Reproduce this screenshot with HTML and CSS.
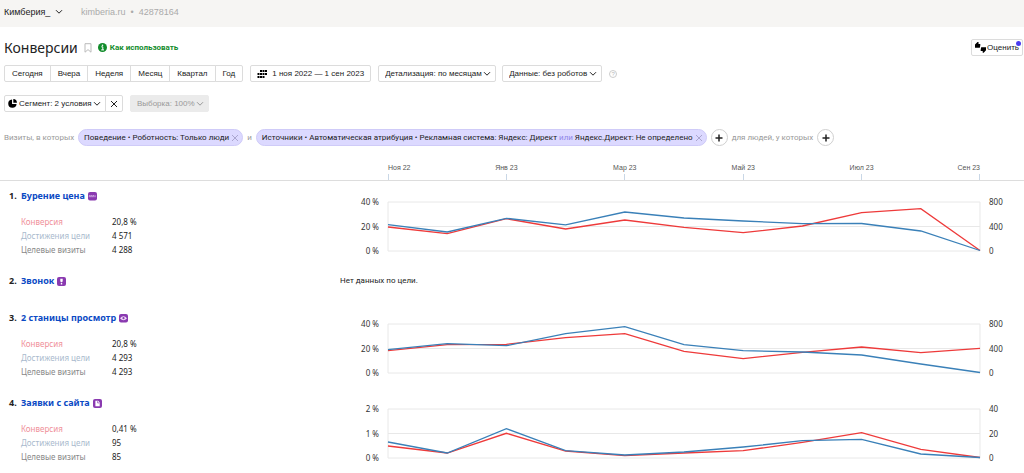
FILE: index.html
```html
<!DOCTYPE html>
<html lang="ru">
<head>
    <meta charset="UTF-8">
    <meta name="viewport" content="width=device-width, initial-scale=1.0">
    <title>Конверсии</title>
    <link rel="stylesheet" href="styles.css">
</head>
<body>
    <!-- общие иконки -->
    <svg class="sprite" aria-hidden="true">
        <symbol id="chevron" viewBox="0 0 8 6"><path d="M1 1.2l3 3 3-3" fill="none" stroke="currentColor"/></symbol>
        <symbol id="cross" viewBox="0 0 8 8"><path d="M1 1l6 6M7 1l-6 6" fill="none" stroke="currentColor"/></symbol>
        <symbol id="plus" viewBox="0 0 8 8"><path d="M4 .5v7M.5 4h7" fill="none" stroke="currentColor" stroke-width="1.5"/></symbol>
    </svg>

    <header class="topbar">
        <div class="dropdown account">
            <select aria-label="Счётчик"><option>Кимберия_</option></select>
            <svg class="chevron"><use href="#chevron"/></svg>
        </div>
        <div class="counter"><a href="#">kimberia.ru</a> &nbsp;•&nbsp; 42878164</div>
    </header>

    <main>
        <div class="title-row">
            <h1>Конверсии</h1>
            <button class="icon-btn" aria-label="В закладки">
                <svg width="8" height="10" viewBox="0 0 8 10"><path d="M1 .7h6v8.5L4 6.6 1 9.2z" fill="none" stroke="#bbb"/></svg>
            </button>
            <a class="howto" href="#">
                <svg width="9" height="9" viewBox="0 0 9 9"><circle cx="4.500" cy="4.500" r="4.500" fill="#128c2b"/><path d="M3.300 3.800h1.500v3M3.200 6.900h2.800" fill="none" stroke="#fff"/><circle cx="4.500" cy="2.200" r=".8" fill="#fff"/></svg>
                Как использовать
            </a>
            <button class="btn rate">
                <svg width="11" height="11" viewBox="0 0 10 10"><path d="M0 2.300L2.300.100h.9v1.700h1.200q.6.200.5.800L4.400 5.200H0z"/><path d="M10 7.500L7.900 9.800H7V8.200H5.500q-.5-.2-.4-.8L5.600 4.800H10z"/></svg>
                Оценить
            </button>
        </div>

        <div class="toolbar">
            <div class="btn-group">
                <button class="btn">Сегодня</button>
                <button class="btn">Вчера</button>
                <button class="btn">Неделя</button>
                <button class="btn">Месяц</button>
                <button class="btn">Квартал</button>
                <button class="btn">Год</button>
            </div>
            <button class="btn date">
                <svg width="10" height="8" viewBox="0 0 10 8"><path d="M3 0h2v2H3zM5.500 0h2v2h-2zM8 0h2v2H8zM.500 3h2v2h-2zM3 3h2v2H3zM5.500 3h2v2h-2zM8 3h2v2H8zM.500 6h2v2h-2zM3 6h2v2H3zM5.500 6h2v2h-2z"/></svg>
                1 ноя 2022 — 1 сен 2023
            </button>
            <div class="dropdown boxed">
                <select aria-label="Детализация"><option>Детализация: по месяцам</option></select>
                <svg class="chevron"><use href="#chevron"/></svg>
            </div>
            <div class="dropdown boxed data">
                <select aria-label="Данные"><option>Данные: без роботов</option></select>
                <svg class="chevron"><use href="#chevron"/></svg>
            </div>
            <button class="icon-btn help" aria-label="Справка">?</button>
        </div>

        <div class="toolbar segment-row">
            <div class="btn-group">
                <div class="dropdown boxed segment">
                    <svg class="pie" width="9" height="9" viewBox="0 0 8 8"><path d="M3.600.400v4h4A3.700 3.700 0 1 1 3.600.400z"/><path d="M4.700 0A3.500 3.500 0 0 1 8 3.300H4.700z"/></svg>
                    <select aria-label="Сегмент"><option>Сегмент: 2 условия</option></select>
                    <svg class="chevron"><use href="#chevron"/></svg>
                </div>
                <button class="btn clear" aria-label="Сбросить сегмент"><svg width="8" height="8"><use href="#cross"/></svg></button>
            </div>
            <div class="dropdown boxed sampling">
                <select aria-label="Выборка" disabled><option>Выборка: 100%</option></select>
                <svg class="chevron"><use href="#chevron"/></svg>
            </div>
        </div>

        <div class="filters">
            <span>Визиты, в которых</span>
            <div class="pill">
                Поведение • Роботность: Только люди
                <button class="icon-btn" aria-label="Удалить условие"><svg width="8" height="8"><use href="#cross"/></svg></button>
            </div>
            <span>и</span>
            <div class="pill">
                <div>Источники • Автоматическая атрибуция • Рекламная система: Яндекс: Директ <em>или</em> Яндекс.Директ: Не определено</div>
                <button class="icon-btn" aria-label="Удалить условие"><svg width="8" height="8"><use href="#cross"/></svg></button>
            </div>
            <button class="add" aria-label="Добавить условие"><svg width="8" height="8"><use href="#plus"/></svg></button>
            <span>для людей, у которых</span>
            <button class="add" aria-label="Добавить условие для людей"><svg width="8" height="8"><use href="#plus"/></svg></button>
        </div>

        <div class="timeline">
            <div class="months">
                <span>Ноя 22</span>
                <span>Янв 23</span>
                <span>Мар 23</span>
                <span>Май 23</span>
                <span>Июл 23</span>
                <span>Сен 23</span>
            </div>
        </div>

        <section class="goal">
            <div class="goal-info">
                <h2><span class="num">1.</span><a href="#">Бурение цена</a>
                    <svg class="badge" viewBox="0 0 9 9"><rect width="9" height="8.500" rx="2"/><path d="M1.300 5.200V3.500h1v1.700M3.200 5.200V3.500h1v1.700M5 5.200V3.500h1v1.700M7.200 3.200v2" stroke="#e6cdf3" stroke-width=".6" fill="none"/></svg>
                </h2>
                <table>
                    <tr class="conv"><th>Конверсия</th><td>20,8 %</td></tr>
                    <tr class="reach"><th>Достижения цели</th><td>4 571</td></tr>
                    <tr><th>Целевые визиты</th><td>4 288</td></tr>
                </table>
            </div>
            <div class="axis left"><span>40 %</span><span>20 %</span><span>0 %</span></div>
            <svg class="chart" viewBox="0 0 10 49" preserveAspectRatio="none">
                <path class="grid" d="M0 0H10V49H0zM0 24.500H10"/>
                <polyline class="red" points="0,25 1,31.7 2,16.7 3,27 4,18 5,25.3 6,30.7 7,24 8,10.7 9,6.7 10,48.5"/>
                <polyline class="blue" points="0,22.7 1,30 2,16.3 3,22.8 4,10 5,16 6,19 7,21.7 8,21.5 9,29 10,48.5"/>
            </svg>
            <div class="axis right"><span>800</span><span>400</span><span>0</span></div>
        </section>

        <section class="goal">
            <div class="goal-info">
                <h2><span class="num">2.</span><a href="#">Звонок</a>
                    <svg class="badge" viewBox="0 0 9 9"><rect width="9" height="9" rx="2"/><path d="M3.300 1.800h2.400v2.400l-.7 1H4l-.7-1zM3.800 6h1.400v1.400H3.800z" fill="#fff"/></svg>
                </h2>
            </div>
            <p class="empty">Нет данных по цели.</p>
        </section>

        <section class="goal">
            <div class="goal-info">
                <h2><span class="num">3.</span><a href="#">2 станицы просмотр</a>
                    <svg class="badge" viewBox="0 0 9 9"><rect width="9" height="8.500" rx="2"/><path d="M1 4.300q3.500-4 7 0-3.500 4-7 0z" fill="#f0def8"/><circle cx="4.500" cy="4.200" r="1.100"/></svg>
                </h2>
                <table>
                    <tr class="conv"><th>Конверсия</th><td>20,8 %</td></tr>
                    <tr class="reach"><th>Достижения цели</th><td>4 293</td></tr>
                    <tr><th>Целевые визиты</th><td>4 293</td></tr>
                </table>
            </div>
            <div class="axis left"><span>40 %</span><span>20 %</span><span>0 %</span></div>
            <svg class="chart" viewBox="0 0 10 49" preserveAspectRatio="none">
                <path class="grid" d="M0 0H10V49H0zM0 24.500H10"/>
                <polyline class="red" points="0,26.7 1,20.7 2,20.3 3,13.7 4,9.7 5,27.3 6,34.7 7,28.3 8,23 9,28.7 10,24.3"/>
                <polyline class="blue" points="0,25.7 1,19.7 2,21.7 3,9.7 4,2.7 5,20.7 6,26.7 7,28 8,31 9,40 10,48.5"/>
            </svg>
            <div class="axis right"><span>800</span><span>400</span><span>0</span></div>
        </section>

        <section class="goal">
            <div class="goal-info">
                <h2><span class="num">4.</span><a href="#">Заявки с сайта</a>
                    <svg class="badge" viewBox="0 0 9 9"><rect width="9" height="9" rx="2"/><path d="M2.400 1.800h2.800l1.500 1.600v3.800H2.400z" fill="#fff"/><path d="M4.600 2.200v1.700h1.800" fill="none" stroke="#8a3ab0" stroke-width=".7"/></svg>
                </h2>
                <table>
                    <tr class="conv"><th>Конверсия</th><td>0,41 %</td></tr>
                    <tr class="reach"><th>Достижения цели</th><td>95</td></tr>
                    <tr><th>Целевые визиты</th><td>85</td></tr>
                </table>
            </div>
            <div class="axis left"><span>2 %</span><span>1 %</span><span>0 %</span></div>
            <svg class="chart" viewBox="0 0 10 49" preserveAspectRatio="none">
                <path class="grid" d="M0 0H10V49H0zM0 24.500H10"/>
                <polyline class="red" points="0,37 1,44 2,24.3 3,42 4,46.7 5,44 6,41.7 7,33.3 8,23.7 9,40.3 10,48.5"/>
                <polyline class="blue" points="0,33 1,44 2,19.7 3,41.7 4,46 5,43 6,38 7,31.7 8,30.3 9,45 10,48.5"/>
            </svg>
            <div class="axis right"><span>40</span><span>20</span><span>0</span></div>
        </section>
    </main>
</body>
</html>
```
FILE: styles.css
```css
:root {
    --ui: 'Liberation Sans', Arial, sans-serif;
    --text: 'Noto Sans', 'Open Sans', sans-serif;
    --narrow: Roboto, Arial, sans-serif;
    --border: #dcdcdc;
    --link: #0b4ac4;
    --left: 340px;
    --axis-left: 48px;
    --axis-right: 44px;
}

* {
    margin: 0;
    padding: 0;
    box-sizing: border-box;
}

body {
    background: #fff;
    color: #222;
    font: 8px/14px var(--text);
}

a {
    color: inherit;
    text-decoration: none;
}

button,
select {
    font: 8px/14px var(--ui);
    color: #222;
    background: none;
    border: 0;
    cursor: pointer;
}

svg {
    display: block;
    flex: none;
}

.sprite {
    position: absolute;
    width: 0;
    height: 0;
}

/* Шапка */
.topbar {
    display: flex;
    align-items: center;
    height: 27px;
    padding: 0 4px 3px;
    background: #f6f5f3;
    font-family: var(--ui);
    font-size: 9px;
}

.account select {
    font-size: 9px;
    padding-right: 12px;
}

.counter {
    margin-left: 18px;
    color: #aaa;
}

/* Списки */
.dropdown {
    position: relative;
    display: flex;
    align-items: center;
}

.dropdown select {
    appearance: none;
}

.chevron {
    position: absolute;
    right: 0;
    width: 8px;
    height: 6px;
    pointer-events: none;
}

.boxed {
    height: 17px;
    border: 1px solid var(--border);
    border-radius: 2px;
}

.boxed select {
    height: 15px;
    padding: 0 13px 0 6px;
}

.boxed .chevron {
    right: 4px;
}

/* Кнопки */
.btn {
    display: flex;
    align-items: center;
    height: 17px;
    padding: 0 7px;
    border: 1px solid var(--border);
    border-radius: 2px;
    background: #fff;
}

.icon-btn {
    display: flex;
    align-items: center;
}

.btn-group {
    display: flex;
}

.btn-group > * + * {
    margin-left: -1px;
}

.btn-group > :not(:first-child) {
    border-top-left-radius: 0;
    border-bottom-left-radius: 0;
}

.btn-group > :not(:last-child) {
    border-top-right-radius: 0;
    border-bottom-right-radius: 0;
}

/* Заголовок */
.title-row {
    display: flex;
    align-items: center;
    height: 38px;
    padding: 3px 0 0 4px;
}

h1 {
    font-size: 14px;
    font-weight: 400;
    line-height: 20px;
    margin-right: 6px;
}

.howto {
    display: flex;
    align-items: center;
    gap: 3px;
    margin-left: 6px;
    color: #128c2b;
    font: bold 8px/14px var(--narrow);
}

.rate {
    position: relative;
    gap: 1px;
    margin-left: auto;
    margin-right: 1px;
    padding: 0 3px;
}

.rate::after {
    content: '';
    position: absolute;
    top: 1px;
    right: 1px;
    width: 5px;
    height: 5px;
    border-radius: 50%;
    background: #4a3cf0;
}

/* Панель */
.toolbar {
    display: flex;
    align-items: center;
    gap: 7px;
    padding-left: 4px;
}

.date {
    gap: 5px;
    padding: 0 6px;
}

.data {
    margin-left: -1px;
}

.help {
    justify-content: center;
    width: 8px;
    height: 8px;
    border: 1px solid #ccc;
    border-radius: 50%;
    color: #bbb;
    font-size: 6px;
    line-height: 6px;
}

.segment-row {
    margin-top: 13px;
}

.segment select {
    padding-left: 2px;
}

.pie {
    margin-left: 3px;
}

.clear {
    padding: 0 4px;
}

.sampling {
    border-color: #ebebeb;
    background: #ebebeb;
    color: #999;
}

.sampling select {
    color: #999;
    opacity: 1;
}

/* Условия сегмента */
.filters {
    display: flex;
    align-items: center;
    gap: 4px;
    margin-top: 17px;
    padding-left: 4px;
    color: #999;
    font-family: var(--narrow);
    white-space: nowrap;
}

.pill {
    display: flex;
    align-items: center;
    gap: 2px;
    height: 17px;
    padding: 0 3px 0 5px;
    border: 1px solid #cfcbf8;
    border-radius: 9px;
    background: #dcd9ff;
    color: #222;
}

.pill em {
    font-style: normal;
    color: #8f86e8;
}

.pill button {
    color: #aaa6cf;
}

.add {
    display: grid;
    place-items: center;
    width: 17px;
    height: 17px;
    border: 1px solid #d0d0d0;
    border-radius: 50%;
}

/* Шкала месяцев */
.timeline {
    margin-top: 15px;
    padding: 0 var(--axis-right) 0 calc(var(--left) + var(--axis-left));
    border-bottom: 1px solid #ddd;
    font-family: var(--ui);
    font-size: 7px;
    color: #555;
}

.months {
    display: grid;
    grid-template-columns: 1fr 2fr 2fr 2fr 2fr 1fr;
}

.months span {
    display: flex;
    flex-direction: column;
    align-items: center;
    height: 19px;
    line-height: 13px;
    white-space: nowrap;
}

.months span:first-child {
    align-items: flex-start;
}

.months span:last-child {
    align-items: flex-end;
}

.months span::after {
    content: '';
    width: 1px;
    height: 6px;
    background: #c9d7e6;
}

/* Цели */
.goal {
    display: grid;
    grid-template-columns: var(--left) var(--axis-left) 1fr var(--axis-right);
    align-items: start;
    padding: 8px 0;
}

.goal-info {
    padding-left: 9px;
}

h2 {
    display: flex;
    align-items: center;
    font-size: 9px;
    line-height: 14px;
}

h2 a {
    color: var(--link);
}

.num {
    width: 12px;
}

.badge {
    width: 9px;
    height: 9px;
    margin-left: 3px;
    fill: #8a3ab0;
}

.goal table {
    margin: 12px 0 0 12px;
    border-collapse: collapse;
}

.goal th {
    width: 91px;
    font-weight: 400;
    text-align: left;
    color: #888;
}

.goal .conv th {
    color: #ef8f98;
}

.goal .reach th {
    color: #a9bacd;
}

.empty {
    grid-column: 2 / -1;
    padding-bottom: 7px;
    font-family: var(--narrow);
}

.axis {
    display: flex;
    flex-direction: column;
    justify-content: space-between;
    height: 63px;
    margin-top: 6px;
    color: #333;
}

.left {
    text-align: right;
    padding-right: 9px;
}

.right {
    padding-left: 9px;
}

.chart {
    width: 100%;
    height: 49px;
    margin-top: 13px;
    overflow: visible;
}

.chart * {
    fill: none;
    vector-effect: non-scaling-stroke;
}

.grid {
    stroke: #e8e8e8;
}

.red {
    stroke: #ee3a3a;
    stroke-width: 1.3px;
}

.blue {
    stroke: #3a80b8;
    stroke-width: 1.3px;
}
```
